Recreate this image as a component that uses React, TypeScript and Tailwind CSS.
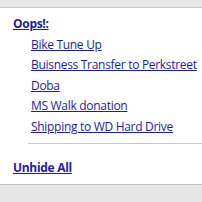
import React from 'react';

const items = [
  'Bike Tune Up',
  'Buisness Transfer to Perkstreet',
  'Doba',
  'MS Walk donation',
  'Shipping to WD Hard Drive',
];

const App: React.FC = () => {
  return (
    <div className="w-[202px] h-[202px] flex flex-col bg-[#e6e6e6] overflow-hidden" style={{ fontFamily: '"Open Sans", sans-serif' }}>
      <div className="h-[8px] border-b border-[#c8c8c8] shrink-0" />
      <div className="bg-white flex flex-col pl-[13px] pt-[6px] h-[177px] border-b border-[#c0c0c0] shrink-0">
        <a href="#" className="text-[12px] leading-[19.5px] tracking-[-0.3px] font-bold text-[#1c1ca8] underline self-start">
          Oops!:
        </a>
        <ul className="flex flex-col pl-[18px]">
          {items.map((item) => (
            <li key={item} className="leading-[19.5px]">
              <a href="#" className="text-[12px] leading-[19.5px] tracking-[-0.3px] text-[#1c1ca8] underline whitespace-nowrap">
                {item}
              </a>
            </li>
          ))}
        </ul>
        <div className="ml-[15px] mt-[7px] border-t border-[#c8c8c8]" />
        <a href="#" className="mt-[14px] text-[12px] leading-[19.5px] tracking-[-0.3px] font-bold text-[#1c1ca8] underline self-start">
          Unhide All
        </a>
      </div>
    </div>
  );
};

export default App;
